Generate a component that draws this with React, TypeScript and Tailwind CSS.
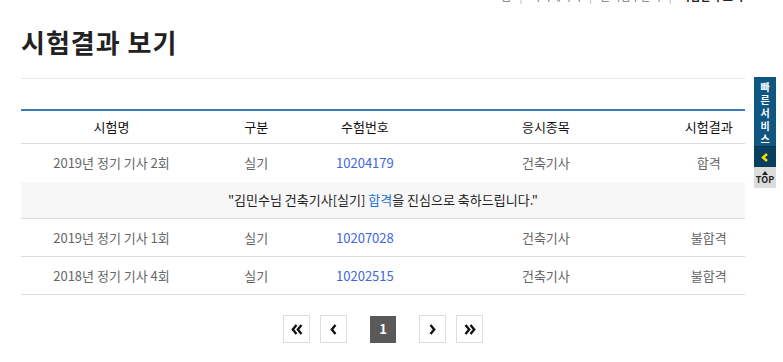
import React from "react";

const rows = [
  { name: "2019년 정기 기사 2회", kind: "실기", no: "10204179", item: "건축기사", result: "합격", msg: true },
  { name: "2019년 정기 기사 1회", kind: "실기", no: "10207028", item: "건축기사", result: "불합격", msg: false },
  { name: "2018년 정기 기사 4회", kind: "실기", no: "10202515", item: "건축기사", result: "불합격", msg: false },
];

const cols = "grid grid-cols-[25%_15%_15%_35%_10%]";

function Chev({ dir, double }: { dir: "l" | "r"; double?: boolean }) {
  const one = dir === "l" ? "M5.5 1 L1.8 5.5 L5.5 10" : "M1.5 1 L5.2 5.5 L1.5 10";
  return (
    <svg width={double ? 12 : 7} height="11" viewBox={double ? "0 0 12 11" : "0 0 7 11"} fill="none">
      <path d={one} stroke="#111" strokeWidth="2.4" />
      {double && <path d={one} stroke="#111" strokeWidth="2.4" transform="translate(5 0)" />}
    </svg>
  );
}

export default function App() {
  return (
    <div
      className="relative w-full h-[362px] overflow-hidden bg-white"
      style={{ fontFamily: '"Noto Sans CJK KR", "Noto Sans", sans-serif' }}
    >
      <div className="ml-[21px] w-[724px]">
        <div className="flex justify-end items-center gap-[8px] text-[11px] leading-[16px] text-[#777] mt-[-12px] pr-[2px]">
          <span>홈</span>
          <span className="text-[#aaa]">|</span>
          <span>마이페이지</span>
          <span className="text-[#aaa]">|</span>
          <span>원서접수관리</span>
          <span className="text-[#aaa]">|</span>
          <span className="text-[#222] font-bold">시험결과 보기</span>
        </div>
        <h1 className="mt-[23px] text-[26px] leading-[30px] font-bold text-[#222] tracking-[1px]">시험결과 보기</h1>
        <div className="mt-[21px] border-t border-[#e8e8e8]" />
        <div className="mt-[30px] border-t-2 border-[#3a7ab8]">
          <div className={`${cols} h-[33px] items-center text-center text-[13px] text-[#111] border-b border-[#dddddd]`}>
            <div>시험명</div>
            <div>구분</div>
            <div>수험번호</div>
            <div>응시종목</div>
            <div>시험결과</div>
          </div>
          {rows.map((r) => (
            <React.Fragment key={r.no}>
              <div
                className={`${cols} h-[38px] items-center text-center text-[13px] text-[#666] ${
                  r.msg ? "" : "border-b border-[#dddddd]"
                }`}
              >
                <div>{r.name}</div>
                <div>{r.kind}</div>
                <div className="text-[#4066e0]">{r.no}</div>
                <div>{r.item}</div>
                <div>{r.result}</div>
              </div>
              {r.msg && (
                <div className="h-[37px] flex items-center justify-center bg-[#f7f7f7] text-[13px] text-[#222] border-b border-[#dddddd]">
                  <span>
                    "김민수님 건축기사[실기] <span className="text-[#1a6fd8]">합격</span>을 진심으로 축하드립니다."
                  </span>
                </div>
              )}
            </React.Fragment>
          ))}
        </div>
        <div className="mt-[20px] flex items-center justify-center">
          <div className="flex gap-[10px]">
            <div className="w-[27px] h-[28px] border border-[#dddddd] flex items-center justify-center"><Chev dir="l" double /></div>
            <div className="w-[27px] h-[28px] border border-[#dddddd] flex items-center justify-center"><Chev dir="l" /></div>
          </div>
          <div className="mx-[23px] w-[26px] h-[27px] bg-[#595959] text-white text-[13px] font-bold flex items-center justify-center">1</div>
          <div className="flex gap-[10px]">
            <div className="w-[27px] h-[28px] border border-[#dddddd] flex items-center justify-center"><Chev dir="r" /></div>
            <div className="w-[27px] h-[28px] border border-[#dddddd] flex items-center justify-center"><Chev dir="r" double /></div>
          </div>
        </div>
      </div>

      <div className="absolute left-[754px] top-[77px] w-[22px] flex flex-col">
        <div className="bg-[#0f5683] text-white text-[10px] font-bold leading-[13px] flex flex-col items-center pt-[3px] pb-[1px] border-b border-[#08324d]">
          <span>빠</span>
          <span>른</span>
          <span>서</span>
          <span>비</span>
          <span>스</span>
        </div>
        <div className="bg-[#0a3e5e] h-[20px] flex items-center justify-center">
          <svg width="8" height="9" viewBox="0 0 8 9"><path d="M6 1 L2 4.5 L6 8" stroke="#f5e100" strokeWidth="2.4" fill="none" /></svg>
        </div>
        <div className="bg-[#dcdcdc] h-[21px] flex flex-col items-center justify-center text-[#222]">
          <svg width="6" height="4" viewBox="0 0 6 4"><path d="M0 4 L3 0 L6 4Z" fill="#222" /></svg>
          <span className="text-[9px] font-bold leading-[10px]">TOP</span>
        </div>
      </div>
    </div>
  );
}
